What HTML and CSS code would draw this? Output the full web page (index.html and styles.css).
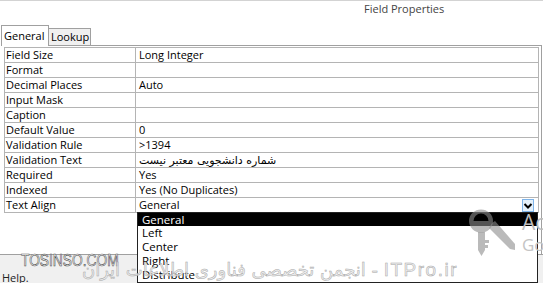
FILE: index.html
```html
<!DOCTYPE html>
<html>
<head>
<meta charset="utf-8">
<link rel="stylesheet" href="styles.css">
</head>
<body>
<div class="screen">
  <div class="topline"></div>
  <div class="header"><span class="title">Field Properties</span></div>
  <div class="tabs">
    <div class="tab active">General</div>
    <div class="tab">Lookup</div>
    <div class="tabfill"></div>
  </div>
  <div class="panel">
    <div class="grid">
      <div class="row"><div class="name">Field Size</div><div class="val">Long Integer</div></div>
      <div class="row"><div class="name">Format</div><div class="val"></div></div>
      <div class="row"><div class="name">Decimal Places</div><div class="val">Auto</div></div>
      <div class="row"><div class="name">Input Mask</div><div class="val"></div></div>
      <div class="row"><div class="name">Caption</div><div class="val"></div></div>
      <div class="row"><div class="name">Default Value</div><div class="val">0</div></div>
      <div class="row"><div class="name">Validation Rule</div><div class="val">&gt;1394</div></div>
      <div class="row"><div class="name">Validation Text</div><div class="val"><span class="fa">شماره دانشجویی معتبر نیست</span></div></div>
      <div class="row"><div class="name">Required</div><div class="val">Yes</div></div>
      <div class="row"><div class="name">Indexed</div><div class="val">Yes (No Duplicates)</div></div>
      <div class="row"><div class="name">Text Align</div><div class="val combo"><span>General</span><span class="dd"><svg width="10" height="9" viewBox="0 0 10 9"><path d="M1.5 3 L5 6.5 L8.5 3" fill="none" stroke="#000" stroke-width="2"/></svg></span></div></div>
    </div>
  </div>
  <div class="status">Help.</div>

  <ul class="list">
    <li class="sel">General</li>
    <li>Left</li>
    <li>Center</li>
    <li>Right</li>
    <li>Distribute</li>
  </ul>

  <svg class="wm-key" width="60" height="56" viewBox="462 204 60 56">
    <g fill="#8c8c8c" fill-opacity="0.6">
      <path fill-rule="evenodd" d="M469 221 A12 11.5 0 1 0 493 221 A12 11.5 0 1 0 469 221 Z M473.5 221 A7.5 7.5 0 0 1 488.5 221 Z"/>
      <path d="M478 232 L485 232 L485 250 L481.5 256 L478 250 Z M485 240 L489 240 L489 243 L485 243 Z M485 245 L488 245 L488 248 L485 248 Z"/>
      <path d="M492 223 L495 221 L515 244 L515 250 L510 249 L489 228 Z M503 240 L506 237 L508 239 L505 242 Z"/>
    </g>
  </svg>
  <div class="wm-ac">Ac</div>
  <div class="wm-go">Go</div>
  <div class="wm-tosinso">TOSINSO.COM</div>
  <div class="wm-itpro" dir="rtl"><span class="lat">ITPro.ir</span> - انجمن تخصصی فناوری اطلاعات ایران</div>
</div>
</body>
</html>
```
FILE: styles.css
```css
* { box-sizing: border-box; }
html, body { margin: 0; padding: 0; background: #fff; }
.screen {
  position: relative;
  width: 543px;
  height: 283px;
  overflow: hidden;
  font-family: "Open Sans", "Noto Sans", sans-serif;
  font-size: 11px;
  color: #000;
  background: #fff;
}
.topline { height: 1px; background: #d3d3d3; }
.header {
  height: 24px;
  padding-left: 364px;
  padding-top: 1px;
  line-height: 14px;
  color: #444;
}
.tabs {
  display: flex;
  align-items: flex-end;
  height: 21px;
  width: 542px;
}
.tab {
  border-top: 1px solid #a0a0a0;
  border-right: 1px solid #a0a0a0;
  line-height: 16px;
}
.tab.active {
  margin-left: 1px;
  width: 48px;
  height: 21px;
  border-left: 1px solid #a0a0a0;
  padding-left: 2px;
  padding-top: 1px;
  line-height: 17px;
  background: #fff;
}
.tab:not(.active) {
  width: 42px;
  height: 18px;
  padding-left: 2px;
  border-bottom: 1px solid #a0a0a0;
  background: #f0f0f0;
}
.tabfill {
  flex: 1;
  height: 1px;
  border-bottom: 1px solid #a0a0a0;
}
.panel {
  width: 542px;
  height: 208px;
  border-right: 1px solid #a0a0a0;
  padding-top: 1px;
}
.grid {
  margin-left: 4px;
  width: 535px;
  border-top: 1px solid #b4b4b4;
  border-left: 1px solid #b4b4b4;
  border-right: 1px solid #b4b4b4;
}
.row {
  display: grid;
  grid-template-columns: 131px 1fr;
  height: 15px;
  border-bottom: 1px solid #b4b4b4;
  line-height: 14px;
}
.name {
  border-right: 1px solid #b4b4b4;
  padding-left: 1px;
  white-space: nowrap;
}
.val { padding-left: 3px; white-space: nowrap; }
.fa { font-family: "DejaVu Sans", sans-serif; font-size: 11px; }
.combo { display: flex; align-items: center; }
.dd {
  margin-left: auto;
  margin-right: 4px;
  width: 12px;
  height: 13px;
  border: 1px solid #7eb4ea;
  background: #e5f1fb;
  display: flex;
  align-items: center;
  justify-content: center;
}
.status {
  height: 29px;
  border-top: 1px solid #a0a0a0;
  background: #f0f0f0;
  padding-left: 2px;
  padding-top: 16px;
  line-height: 14px;
  color: #222;
}
.list {
  position: absolute;
  left: 137px;
  top: 212px;
  width: 401px;
  height: 71px;
  margin: 0;
  padding: 0;
  list-style: none;
  border: 1px solid #222;
  background: #fff;
  font-size: 11.5px;
}
.list li {
  height: 14px;
  line-height: 14px;
  padding-left: 4px;
}
.list li.sel {
  height: 13px;
  line-height: 13px;
  background: #000;
  color: #fff;
}
.wm-key { position: absolute; left: 462px; top: 204px; }
.wm-ac {
  position: absolute; left: 522px; top: 208px;
  font-size: 21px; line-height: 28px; color: #bdbdbd;
}
.wm-go {
  position: absolute; left: 522px; top: 234px;
  font-size: 17px; line-height: 22px; color: #c4c4c4;
}
.wm-tosinso {
  position: absolute; left: 21px; top: 251px;
  font-family: "Liberation Sans", sans-serif;
  font-size: 16px; line-height: 20px;
  color: #fff;
  -webkit-text-stroke: 0.6px #4a4a4a;
  transform: scaleX(0.86);
  transform-origin: left center;
}
.wm-itpro {
  position: absolute; right: 85px; top: 258px;
  font-family: "DejaVu Sans", sans-serif;
  font-size: 18px; line-height: 24px;
  color: rgba(235,235,235,0.8);
  -webkit-text-stroke: 0.5px #a8a8a8;
  white-space: nowrap;
}
.wm-itpro .lat {
  font-family: "Liberation Sans", sans-serif;
  font-size: 19px;
  letter-spacing: 1.5px;
}
```
